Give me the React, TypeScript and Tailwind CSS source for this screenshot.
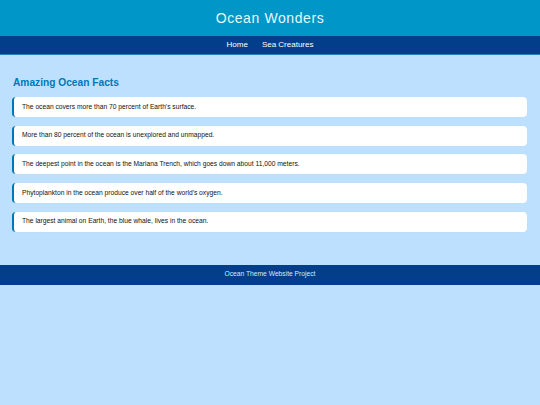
import React from "react";

const facts = [
  "The ocean covers more than 70 percent of Earth's surface.",
  "More than 80 percent of the ocean is unexplored and unmapped.",
  "The deepest point in the ocean is the Mariana Trench, which goes down about 11,000 meters.",
  "Phytoplankton in the ocean produce over half of the world's oxygen.",
  "The largest animal on Earth, the blue whale, lives in the ocean.",
];

export default function App() {
  return (
    <div className="min-h-[405px] bg-[#bde0fe] font-['Liberation_Sans',Arial,sans-serif]">
      <header className="bg-[#0096c7] h-[36px] flex items-center justify-center">
        <h1 className="text-[14px] tracking-[0.6px] text-[#e6f8fc] leading-none">Ocean Wonders</h1>
      </header>
      <nav className="bg-[#023e8a] h-[19px] border-b border-[#2a7fbf] flex items-center justify-center gap-[14px]">
        <span className="text-[8px] text-white leading-none">Home</span>
        <span className="text-[8px] text-white leading-none">Sea Creatures</span>
      </nav>
      <main className="px-[12px] pt-[21px] pb-[33px]">
        <h2 className="text-[10.2px] font-bold text-[#0077b6] leading-none pt-[2px] mb-[9px] ml-[1px]">Amazing Ocean Facts</h2>
        <div className="flex flex-col gap-[8.6px] pr-[1px]">
          {facts.map((f) => (
            <div key={f} className="bg-white rounded-[4px] border-l-[2px] border-[#0077b6] h-[20px] flex items-center pl-[8px] shadow-[0_0_1px_rgba(0,0,0,0.08)]">
              <span className="text-[6.7px] text-[#111] leading-none">{f}</span>
            </div>
          ))}
        </div>
      </main>
      <footer className="bg-[#023e8a] h-[20px] flex items-center justify-center">
        <span className="text-[6.7px] text-[#caf0f8] leading-none">Ocean Theme Website Project</span>
      </footer>
    </div>
  );
}
